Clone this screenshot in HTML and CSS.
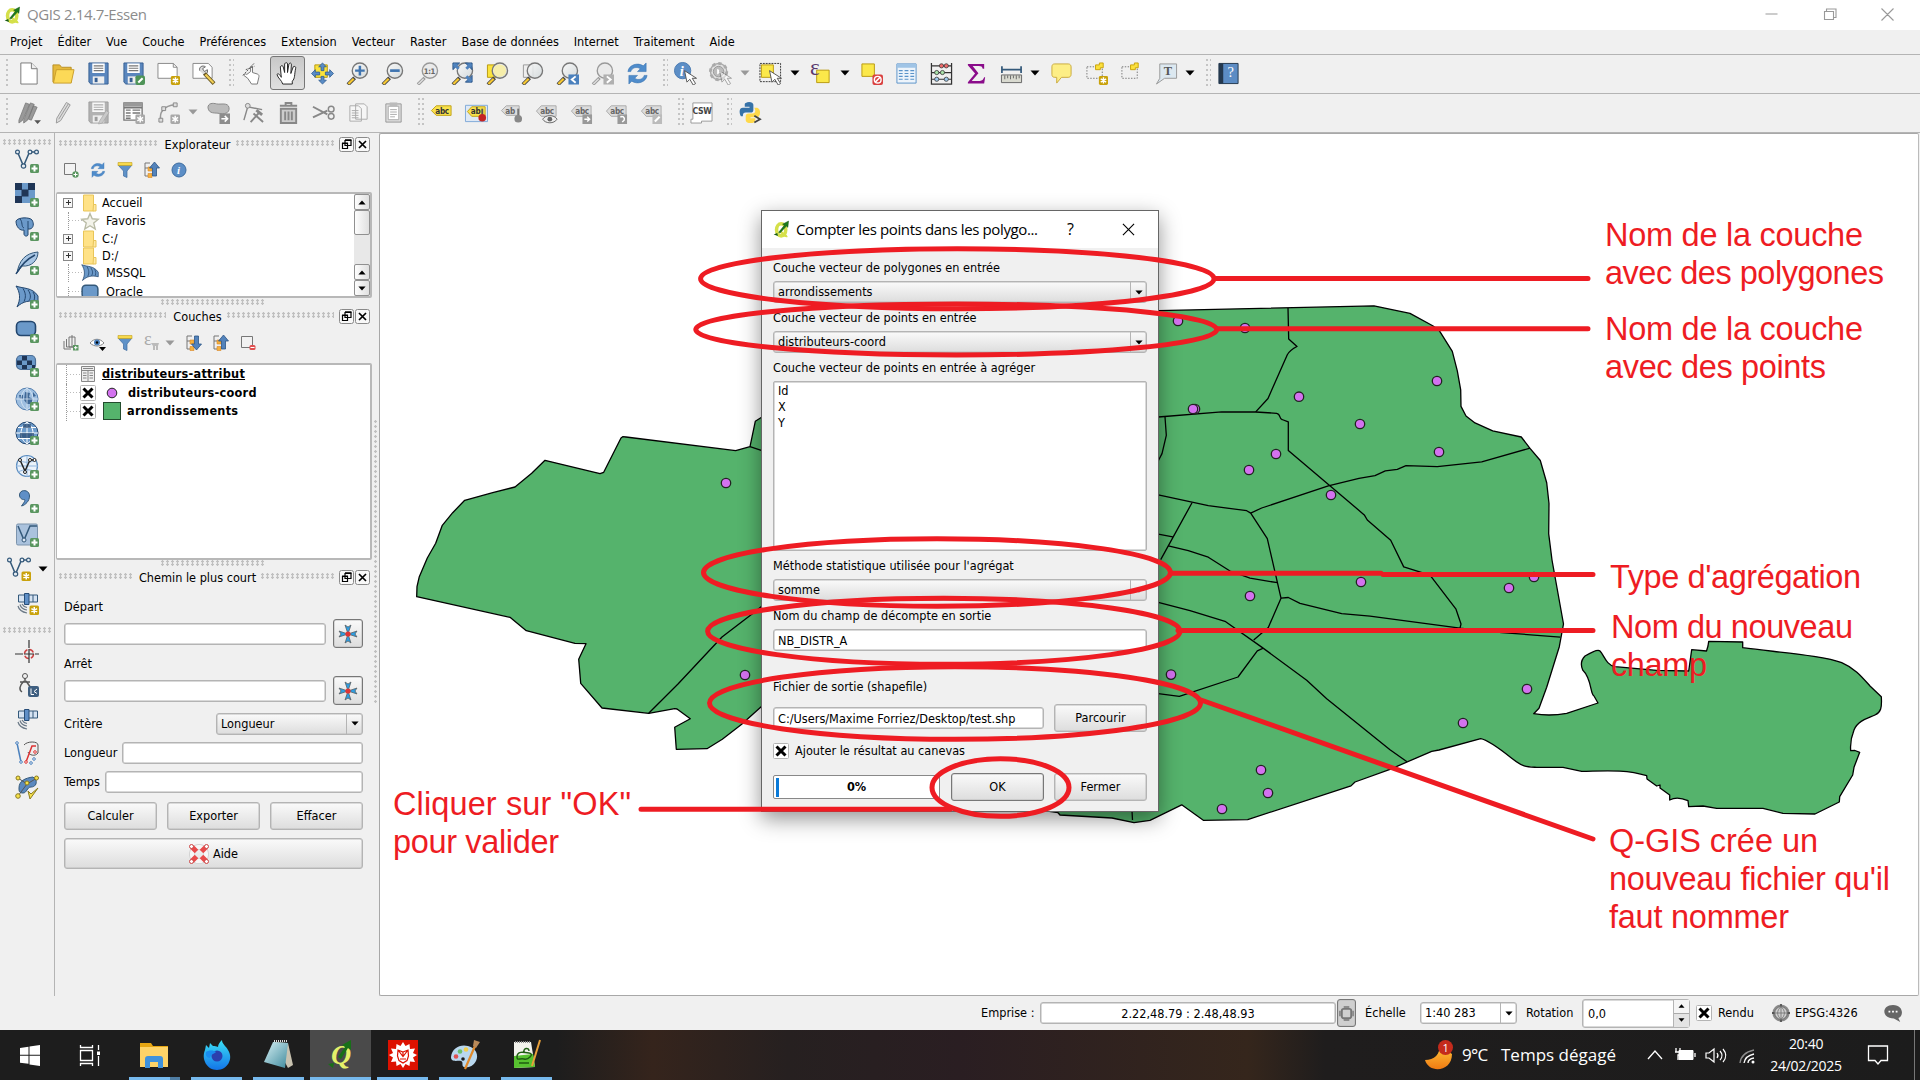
FILE: index.html
```html
<!DOCTYPE html>
<html lang="fr">
<head>
<meta charset="utf-8">
<title>QGIS 2.14.7-Essen</title>
<link rel="stylesheet" href="styles.css">
</head>
<body>
<svg class="sprite" aria-hidden="true">
  <defs>
    <linearGradient id="gl" x2="1" y2="1"><stop offset="0" stop-color="#fafafa"/><stop offset="1" stop-color="#cfd6d8"/></linearGradient>
    <linearGradient id="moon" x2="0" y2="1"><stop offset="0" stop-color="#ffc83d"/><stop offset="1" stop-color="#f07a12"/></linearGradient>
    <linearGradient id="fox" x2="0" y2="1"><stop offset="0" stop-color="#3be0f5"/><stop offset="1" stop-color="#1374e8"/></linearGradient>
    <linearGradient id="note" x2="1" y2="1"><stop offset="0" stop-color="#d6f0f4"/><stop offset="1" stop-color="#3f8a9c"/></linearGradient>
  </defs>
  <symbol id="plus" viewBox="0 0 24 24"><rect x="15" y="15" width="9" height="9" rx="1.500" fill="#5a9660"/><path d="M19.500 16.500v6M16.500 19.500h6" stroke="#fff" stroke-width="2"/></symbol>
  <symbol id="star" viewBox="0 0 24 24"><rect x="14.500" y="14.500" width="9.500" height="9.500" rx="1.500" fill="#c9a20c"/><path d="M19.250 16v6.500M16.400 17.600l5.700 3.300M22.100 17.600l-5.700 3.300" stroke="#fff" stroke-width="1.500"/></symbol>
  <symbol id="gstar" viewBox="0 0 24 24"><rect x="14" y="14" width="10" height="10" rx="1.500" fill="#a8a8a8"/><path d="M19 15.500v7M16 17.200l6 3.500M22 17.200l-6 3.500" stroke="#fff" stroke-width="1.500"/></symbol>
  <symbol id="lens" viewBox="0 0 24 24"><path d="M9 16.500l-7 7" stroke="#444" stroke-width="4"/><path d="M8 17.500l-5.500 5.500" stroke="#f7c832" stroke-width="2.400"/><circle cx="14.500" cy="9" r="8" fill="url(#gl)" fill-opacity=".85" stroke="#777" stroke-width="1.400"/></symbol>
  <symbol id="glens" viewBox="0 0 24 24"><path d="M9 16.500l-7 7" stroke="#999" stroke-width="3.400"/><path d="M8 17.500l-5.500 5.500" stroke="#ddd" stroke-width="1.600"/><circle cx="14.500" cy="9" r="8" fill="#eaeaea" stroke="#999" stroke-width="1.400"/></symbol>
  <symbol id="cursor" viewBox="0 0 24 24"><path d="M11 9l2.500 12 3-3 3.500 6 2.500-1.500-3.500-5.500h4.500z" fill="#fff" stroke="#555" stroke-width="1"/></symbol>
  <symbol id="refresh" viewBox="0 0 24 24"><path d="M2 10C3 3 12 0 18 4l3-3v9h-9l3-3C11 4.500 6 6 5 10zM22 14c-1 7-10 10-16 6l-3 3v-9h9l-3 3c4 2.500 9 1 10-3z" fill="#4f8ccb" stroke="#3a73b0" stroke-width=".6"/></symbol>
  <symbol id="floppy" viewBox="0 0 24 24"><path d="M2 1h20v22H4l-2-2z" fill="#5a86bd" stroke="#365f92"/><path d="M5.500 1.500h13v10h-13z" fill="#fff"/><path d="M7 4h10M7 6.500h10M7 9h10" stroke="#777" stroke-width="1.200"/><path d="M6 15h12v7.500H6z" fill="#eee"/><path d="M8 16.500h3v4.500H8z" fill="#365f92"/></symbol>
  <symbol id="vee" viewBox="0 0 24 24"><path d="M2.500 3l6 14 6-14h7" fill="none" stroke="#34597a" stroke-width="1.500"/><g fill="#e8eef4" stroke="#34597a" stroke-width="1.200"><circle cx="2.500" cy="3" r="1.900"/><circle cx="8.500" cy="17" r="2.200"/><circle cx="15" cy="3" r="1.900"/><circle cx="21.500" cy="3" r="1.900"/></g></symbol>
  <symbol id="label" viewBox="0 0 24 24"><path d="M6.500 6H22v11H6.500L1.500 11.500z" fill="#dcdcdc" stroke="#aaa"/><text x="5.500" y="15" class="abc" fill="#666">abc</text></symbol>
  <symbol id="sat" viewBox="0 0 24 24"><path d="M3.500 4h19v7h-19z" fill="#d6e3f2" stroke="#34597a"/><path d="M9.500 2.500h4.500v11H9.500z" fill="#5f8fc7" stroke="#274d78"/><path d="M18 4v7" stroke="#34597a"/><path d="M3 15c1 4 4 6 9 7M5 13.500c1 3.500 3.500 5 7 5.500M7 13c1 2 3 3 5 3.500" fill="none" stroke="#6c7a88" stroke-width="1.200"/></symbol>
  <symbol id="globe" viewBox="0 0 24 24"><circle cx="12" cy="12" r="11" fill="#6d9ccc" stroke="#23466e"/><path d="M1 12h22M3 6.500h18M3 17.500h18M12 1v22M12 1c-8 6-8 16 0 22M12 1c8 6 8 16 0 22" fill="none" stroke="#fff" stroke-width="1"/></symbol>
  <symbol id="folder" viewBox="0 0 16 18"><path d="M1.500 1h10v16h-10z" fill="#ffe287" stroke="#e9c558"/><path d="M11.500 10.500h2.500V17h-3z" fill="#ffe9a3" stroke="#e9c558"/></symbol>
  <symbol id="sail" viewBox="0 0 24 24"><path d="M1 1c8 3 16 1 22 10v6C15 15 8 16 2 22 6 14 5 7 1 1z" fill="#6b99c9" stroke="#23466e"/><path d="M8 3.500c3 5 3 9 1 13M13 5c3 4 3 8 1 10.500M18 7c2 3 2 5 1 8.500" stroke="#23466e" fill="none"/></symbol>
  <symbol id="filter" viewBox="0 0 16 16"><path d="M1 3h14l-5 6v6.500L6.500 14V9z" fill="#5f92c8" stroke="#3d6ca0" stroke-width=".7"/><path d="M1 .5h14v3H1z" fill="#f7d94c" stroke="#c2a11c" stroke-width=".6"/></symbol>
  <symbol id="tree" viewBox="0 0 16 16"><path d="M1 1v13h4M1 6h4M1 1h5" stroke="#777" fill="none"/><path d="M4 5h4v4H4zM4 11.500h4v4H4z" fill="#f6b13c" stroke="#d8872a" stroke-width=".6"/></symbol>
  <symbol id="arrowup" viewBox="0 0 16 16"><path d="M10.500 0l5 6h-3v8h-4V6h-3z" fill="#5383bb" stroke="#2c5587" stroke-width=".8"/></symbol>
  <symbol id="restore" viewBox="0 0 16 16"><rect x=".5" y=".5" width="14" height="14" rx="2" fill="#f8f8f8" stroke="#8a8a8a"/><path d="M6 3.500h6v5H6zM3.500 6.500h5v5h-5z" fill="#f8f8f8" stroke="#000" stroke-width="1.200"/><path d="M6 3h6.500M3 6.300h6" stroke="#000" stroke-width="1.600"/></symbol>
  <symbol id="close" viewBox="0 0 16 16"><rect x=".5" y=".5" width="14" height="14" rx="2" fill="#f8f8f8" stroke="#8a8a8a"/><path d="M4 4l7 7M11 4l-7 7" stroke="#000" stroke-width="1.700"/></symbol>
  <symbol id="check" viewBox="0 0 16 16"><rect x=".5" y=".5" width="15" height="15" rx="1" fill="#fff" stroke="#b4b4b4"/><path d="M3.500 3.500l9 9M12.500 3.500l-9 9" stroke="#000" stroke-width="3"/></symbol>
  <symbol id="tri" viewBox="0 0 10 6"><path d="M.5.500h9L5 5.500z"/></symbol>
  <symbol id="target" viewBox="0 0 20 20"><path d="M10 10L7 1l3 2 3-2zM10 10l9-3-2 3 2 3zM10 10l3 9-3-2-3 2zM10 10l-9 3 2-3-2-3z" fill="#2f9de0" stroke="#555" stroke-width=".7"/><circle cx="10" cy="10" r="2.600" fill="#e03535"/></symbol>
  <symbol id="qgis" viewBox="0 0 24 24"><ellipse cx="11.500" cy="12.500" rx="6.500" ry="8.500" fill="none" stroke="#d5e04a" stroke-width="5"/><path d="M11 16c3 0 5 7 9 5" fill="none" stroke="#d5e04a" stroke-width="3.500"/><path d="M8 16l8-10-2.500-1.500L22 0l-1 9-2-1.800L10 17z" fill="#1c7a1c" stroke="#0b4a0b" stroke-width=".6"/><path d="M1 19l5-2 1 4z" fill="#155a15"/></symbol>
</svg>

<header class="titlebar">
  <svg class="app"><use href="#qgis"/></svg>
  <span class="caption">QGIS 2.14.7-Essen</span>
  <svg class="winbtns" viewBox="0 0 150 30"><path d="M8.500 14h12M67.500 11.500h9v8h-9zM69.500 11v-2h9.500v8.500h-2M124.500 8.500l12 12M136.500 8.500l-12 12" fill="none" stroke="#999" stroke-width="1.100"/></svg>
</header>
<nav class="menu"><span>Projet</span><span>Éditer</span><span>Vue</span><span>Couche</span><span>Préférences</span><span>Extension</span><span>Vecteur</span><span>Raster</span><span>Base de données</span><span>Internet</span><span>Traitement</span><span>Aide</span></nav>

<div class="toolbar">
  <i class="grip g0"></i>
  <b class="slot"><svg viewBox="0 0 24 24"><path d="M4 1h11l6 6v16H4z" fill="#fff" stroke="#777"/><path d="M15 1v6h6" fill="#eee" stroke="#777"/></svg></b>
  <b class="slot"><svg viewBox="0 0 24 24"><path d="M1 3h7l2 2.500h10V21H1z" fill="#e5b93c" stroke="#b98f22"/><path d="M4.500 8H23l-3 14H1.500z" fill="#fcd957" stroke="#c99d2a"/></svg></b>
  <b class="slot"><svg><use href="#floppy"/></svg></b>
  <b class="slot"><svg viewBox="0 0 24 24"><use href="#floppy"/><rect x="14" y="14" width="10" height="10" rx="2" fill="#4f9458"/><path d="M17 21.500l4.500-4.500" stroke="#fff" stroke-width="2.200"/></svg></b>
  <b class="slot"><svg viewBox="0 0 24 24"><path d="M1 1.500h16l4 4V17H1z" fill="#fff" stroke="#888"/><path d="M17 1.500v4h4" fill="none" stroke="#888"/><use href="#star"/></svg></b>
  <b class="slot"><svg viewBox="0 0 24 24"><path d="M1 1.500h16l4 4V17H1z" fill="#fff" stroke="#888"/><path d="M8 9c-1-4 3-6 6-4l-3 2 2 3 3-2c1 4-2 6-4 5" fill="#ddd" stroke="#666"/><path d="M13 12l10 10.500" stroke="#665522" stroke-width="4"/><path d="M14 13l8.500 9" stroke="#f2cf55" stroke-width="2.200"/></svg></b>
  <i class="grip g1"></i>
  <b class="slot"><svg viewBox="0 0 24 24"><path d="M6 13l4-3V5c1-1 2-1 2 0v6l5 1.500c2 1 2 2 1.500 4L17 23h-6l-4-6-4-3c0-2 2-2 3-1z" fill="#fff" stroke="#777"/><path d="M2 14L14 1M5 8l9-3.500" stroke="#555" stroke-dasharray="2 1"/></svg></b>
  <b class="slot on"><svg viewBox="0 0 24 24"><path d="M7 23c-1-4-5-6-6-10 1.500-1.500 3 0 4.500 3L4.500 5c1-2 3-1 3 0l1.500 6V2c1-2 3-1.500 3 0v9l1.500-9c1-1.500 3-1 2.500 1L15.500 12l2.500-7c1.500-1 3 0 2.500 1.500C19 14 20 17 17 20v3z" fill="#fff" stroke="#222"/></svg></b>
  <b class="slot"><svg viewBox="0 0 24 24"><path d="M4 3h13v13H4z" fill="#fbe33b" stroke="#b99a10"/><path d="M12 1l4 4h-2.500v4h-3V5H8zM12 23l4-4h-2.500v-4h-3v4H8zM.500 12l4-4v2.500H9v3H4.500V16zM23.500 12l-4-4v2.500H15v3h4.500V16z" fill="#5a8cc6" stroke="#2d5a8e" stroke-width=".8"/></svg></b>
  <b class="slot"><svg viewBox="0 0 24 24"><use href="#lens"/><path d="M14.500 4v10M9.500 9h10" stroke="#3f74b0" stroke-width="2.600"/></svg></b>
  <b class="slot"><svg viewBox="0 0 24 24"><use href="#lens"/><path d="M9.500 9h10" stroke="#3f74b0" stroke-width="2.800"/></svg></b>
  <b class="slot"><svg viewBox="0 0 24 24"><use href="#glens"/><text x="8.200" y="12.500" class="one" fill="#666">1:1</text></svg></b>
  <b class="slot"><svg viewBox="0 0 24 24"><use href="#lens"/><path d="M2 1h7L2 8zM22 1h-7l7 7zM22 21h-7l7-7z" fill="#4f82bd" stroke="#2c5587"/><path d="M3 2l5 5M21 2l-5 5M21 20l-5-5" stroke="#4f82bd" stroke-width="3"/></svg></b>
  <b class="slot"><svg viewBox="0 0 24 24"><path d="M1.500 3h13v13h-13z" fill="#fbe33b" stroke="#b99a10"/><use href="#lens"/><circle cx="14.500" cy="9" r="6.500" fill="#f6eeaa"/></svg></b>
  <b class="slot"><svg viewBox="0 0 24 24"><path d="M2.500 3h10v13h-10z" fill="#eee" stroke="#999"/><use href="#lens"/></svg></b>
  <b class="slot"><svg viewBox="0 0 24 24"><use href="#lens"/><path d="M13 13h11v10.500H13z" fill="#4a80bd"/><path d="M20.500 15l-4 3.300 4 3.300" fill="none" stroke="#fff" stroke-width="2"/></svg></b>
  <b class="slot"><svg viewBox="0 0 24 24"><use href="#glens"/><path d="M13 13h11v10.500H13z" fill="#b0b0b0"/><path d="M16.500 15l4 3.300-4 3.300" fill="none" stroke="#fff" stroke-width="2"/></svg></b>
  <b class="slot"><svg><use href="#refresh"/></svg></b>
  <i class="grip g2"></i>
  <b class="slot"><svg viewBox="0 0 24 24"><circle cx="9" cy="9" r="8.500" fill="#5c8ec6" stroke="#4a7ab2"/><text x="6" y="14.500" class="info" fill="#fff">i</text><use href="#cursor"/></svg></b>
  <b class="slot"><svg viewBox="0 0 24 24"><circle cx="10" cy="10" r="8.500" fill="#e2e2e2" stroke="#aaa" stroke-width="1.500"/><circle cx="10" cy="10" r="8.500" fill="none" stroke="#aaa" stroke-width="3" stroke-dasharray="3.300 3.300"/><circle cx="10" cy="10" r="5.500" fill="#bbb" stroke="#999"/><path d="M8.500 7l5 3-5 3z" fill="#fff"/><use href="#cursor" opacity=".5"/></svg></b>
  <b class="arr dim"><svg><use href="#tri"/></svg></b>
  <b class="slot"><svg viewBox="0 0 24 24"><path d="M1 1.500h21.500v19H1z" fill="none" stroke="#333" stroke-dasharray="2 1"/><path d="M2.500 3H15v13H2.500z" fill="#fbe84a" stroke="#b99a10"/><use href="#cursor"/></svg></b>
  <b class="arr"><svg><use href="#tri"/></svg></b>
  <b class="slot"><svg viewBox="0 0 24 24"><path d="M8 8.500h13v13H8z" fill="#fbe84a" stroke="#b99a10"/><text x="1" y="14" class="eps" fill="#5b3a6e">ε</text></svg></b>
  <b class="arr"><svg><use href="#tri"/></svg></b>
  <b class="slot"><svg viewBox="0 0 24 24"><path d="M2 2h13v13H2z" fill="#fbe84a" stroke="#b99a10"/><rect x="13" y="13" width="11" height="11" rx="2" fill="#d9403f"/><circle cx="18.500" cy="18.500" r="3.500" fill="none" stroke="#fff" stroke-width="1.500"/><path d="M16 21l5-5" stroke="#fff" stroke-width="1.500"/></svg></b>
  <b class="slot"><svg viewBox="0 0 24 24"><path d="M2 2h20v20H2z" fill="#edf4fb" stroke="#5a93c9"/><path d="M2 2h20v4H2z" fill="#9fc4e6"/><path d="M4 9h4M10 9h4M16 9h4M4 12h4M10 12h4M16 12h4M4 15h4M10 15h4M16 15h4M4 18h4M10 18h4M16 18h4" stroke="#5a93c9" stroke-width="1.200"/></svg></b>
  <b class="slot"><svg viewBox="0 0 24 24"><path d="M1.500 1v22h21V1M1 4h22M1 11h22M1 18h22" fill="none" stroke="#333" stroke-width="1.300"/><g stroke="#333" stroke-width=".8"><g fill="#ee6a6a"><circle cx="12" cy="4" r="2.200"/><circle cx="17" cy="4" r="2.200"/></g><g fill="#a8e0a8"><circle cx="7" cy="11" r="2.200"/><circle cx="13" cy="11" r="2.200"/></g><g fill="#9cc8ec"><circle cx="7" cy="18" r="2.200"/><circle cx="17" cy="18" r="2.200"/></g></g></svg></b>
  <b class="slot"><svg viewBox="0 0 24 24"><path d="M3 2h17v5h-1.500c-.5-2-1.500-2.800-4-2.800H8l6 7.500-7 8h8.500c2.500 0 3.500-1.200 4.500-3.700h1L20 22.500H3v-1.500l7.500-9L3 3.500z" fill="#8a0c8a"/></svg></b>
  <b class="slot"><svg viewBox="0 0 24 24"><path d="M2 8h20M2 4.500v7M22 4.500v7" stroke="#34597a" stroke-width="1.800"/><path d="M1.500 13.500h21v8h-21z" fill="#d9dad0" stroke="#666"/><path d="M5 14v4M8 14v3M11 14v4M14 14v3M17 14v4M20 14v3" stroke="#666"/></svg></b>
  <b class="arr"><svg><use href="#tri"/></svg></b>
  <b class="slot"><svg viewBox="0 0 24 24"><path d="M5 2h14c2 0 3 1.500 3 3v8c0 2-1.500 3-3 3H12l-5 6v-6H5c-2 0-3-1-3-3V5c0-2 1-3 3-3z" fill="#fdee86" stroke="#c9a93c"/></svg></b>
  <b class="slot"><svg viewBox="0 0 24 24"><path d="M2 5h16v12H2z" fill="none" stroke="#777" stroke-dasharray="1.500 1.500"/><path d="M11 3h4V1h4v5h-3v2h-5z" fill="#fbe03b" stroke="#c9a20c"/><use href="#star"/></svg></b>
  <b class="slot"><svg viewBox="0 0 24 24"><path d="M2 5h16v12H2z" fill="none" stroke="#777" stroke-dasharray="1.500 1.500"/><path d="M11 3h4V1h4v5h-3v2h-5z" fill="#fbe03b" stroke="#c9a20c"/></svg></b>
  <b class="slot"><svg viewBox="0 0 24 24"><path d="M5 2h17.500v15H10l-8.500 6L5 17z" fill="#dce8f0" stroke="#999"/><text x="9" y="14" class="tee" fill="#555">T</text></svg></b>
  <b class="arr"><svg><use href="#tri"/></svg></b>
  <i class="grip g3"></i>
  <b class="slot"><svg viewBox="0 0 24 24"><path d="M2 1.500h20v21H2z" fill="#5c8cc4" stroke="#24384e"/><path d="M2 1.500h4.500v21H2z" fill="#24384e"/><text x="11" y="16" class="q" fill="#fff">?</text></svg></b>
</div>

<div class="toolbar">
  <i class="grip g0"></i>
  <b class="slot"><svg viewBox="0 0 24 24"><path d="M2 20L9 2l4 1.500L6 20l-4 3zM7 20l7-18 4 1.500L11 20l-4 3zM12 19l5-14 4 1.500L15 20z" fill="#999" stroke="#777" stroke-width=".8"/><path d="M18 20h7l-3.500 4z" fill="#555"/></svg></b>
  <b class="slot"><svg viewBox="0 0 24 24"><path d="M5 18L15 1.500l4 2.500L9 20.500 4.500 23z" fill="#ddd" stroke="#999"/><path d="M7 19L17 3" stroke="#999"/></svg></b>
  <b class="slot gray"><svg viewBox="0 0 24 24"><use href="#floppy"/><path d="M13 21l7-11 3 2-7 11-4 1z" fill="#aaa" stroke="#666" stroke-width=".7"/></svg></b>
  <b class="slot"><svg viewBox="0 0 24 24"><path d="M2 2h19v18H2zM2 7h19" fill="#fff" stroke="#777" stroke-width="1.400"/><path d="M2 2h19v4H2z" fill="#999"/><path d="M4 9.500h5M11 9.500h8M4 12.500h5M11 12.500h8M4 15.500h5M4 18h5" stroke="#777" stroke-width="1.500"/><use href="#gstar"/></svg></b>
  <b class="slot"><svg viewBox="0 0 24 24"><path d="M4 20C2 12 7 5 19 4" fill="none" stroke="#999" stroke-width="1.600"/><path d="M2 18h4v4H2zM5 6h4v4H5zM17 2h4v4h-4z" fill="#ddd" stroke="#888"/><use href="#gstar"/></svg></b>
  <b class="arr dim"><svg><use href="#tri"/></svg></b>
  <b class="slot"><svg viewBox="0 0 24 24"><path d="M1 7c0-5 5-5 9-4s12-2 13 4-6 7-10 6S2 14 1 7z" fill="#bbb" stroke="#888"/><path d="M13 13h11v11H13z" fill="#8d8d8d"/><path d="M15 18.500h6M18.500 15.500l3 3-3 3" fill="none" stroke="#fff" stroke-width="1.600"/></svg></b>
  <b class="slot"><svg viewBox="0 0 24 24"><path d="M2 20L6 6l15 3" fill="none" stroke="#888" stroke-width="1.500"/><circle cx="6" cy="5" r="2.500" fill="#ddd" stroke="#888"/><path d="M9 22l9-10M12 13l10 9" stroke="#888" stroke-width="2"/><path d="M15 9.500l6 5" stroke="#888" stroke-width="3"/></svg></b>
  <b class="slot"><svg viewBox="0 0 24 24"><path d="M4 8h16v15H4z" fill="#ccc" stroke="#888" stroke-width="2"/><path d="M3 5h18M9 5V2h6v3M8.500 11v9M12 11v9M15.500 11v9" fill="none" stroke="#888" stroke-width="2"/></svg></b>
  <b class="slot"><svg viewBox="0 0 24 24"><path d="M1 6l15 8M1 17l15-7" stroke="#888" stroke-width="2"/><circle cx="20" cy="8.500" r="3" fill="none" stroke="#888" stroke-width="1.500"/><circle cx="20" cy="16" r="3" fill="none" stroke="#888" stroke-width="1.500"/></svg></b>
  <b class="slot"><svg viewBox="0 0 24 24"><path d="M9 3h9l3 3v13H9zM3 5h9l3 3v13H3z" fill="#f6f6f6" stroke="#aaa"/><path d="M5 10h7M5 12.500h7M5 15h7M5 17.500h7" stroke="#aaa"/></svg></b>
  <b class="slot"><svg viewBox="0 0 24 24"><path d="M4 3h16v19H4z" fill="#ddd" stroke="#999"/><path d="M6.500 5.500h11v14h-11z" fill="#fff" stroke="#aaa"/><path d="M8 1.500h8v4H8z" fill="#bbb"/><path d="M8.500 9h7M8.500 11.500h7M8.500 14h7M8.500 16.500h5" stroke="#aaa"/></svg></b>
  <i class="grip g3"></i>
  <b class="slot"><svg viewBox="0 0 24 24"><path d="M6.500 5H22v10H6.500L1.500 10z" fill="#f9e14b" stroke="#c0a21a"/><text x="5.500" y="13.500" class="abc" fill="#333">abc</text></svg></b>
  <b class="slot"><svg viewBox="0 0 24 24"><path d="M.5 4.500h23v17H.5z" fill="#dfe9f5" stroke="#7fa9d8"/><path d="M7 6h14v10H7L2.500 11z" fill="#f9e14b" stroke="#c0a21a"/><text x="6" y="14" class="abc" fill="#333">ab</text><path d="M18 8v8" stroke="#555" stroke-width="2"/><circle cx="18" cy="17.500" r="4" fill="#c42323"/></svg></b>
  <b class="slot"><svg viewBox="0 0 24 24"><path d="M6.500 5H20v10H6.500L1.500 10z" fill="#dcdcdc" stroke="#aaa"/><text x="5.500" y="13.500" class="abc" fill="#666">ab</text><path d="M19 8v8" stroke="#777" stroke-width="2"/><circle cx="19" cy="18.500" r="4" fill="#888"/></svg></b>
  <b class="slot"><svg viewBox="0 0 24 24"><use href="#label" y="-1"/><path d="M8 19c3-5 12-5 15 0-3 5-12 5-15 0z" fill="#eee" stroke="#666"/><circle cx="15.500" cy="19" r="2.500" fill="#666"/></svg></b>
  <b class="slot"><svg viewBox="0 0 24 24"><use href="#label" y="-1"/><path d="M13 14h10v10H13z" fill="#999"/><path d="M15 19h5M18 16.500l2.500 2.500-2.500 2.500" fill="none" stroke="#fff" stroke-width="1.500"/></svg></b>
  <b class="slot"><svg viewBox="0 0 24 24"><use href="#label" y="-1"/><path d="M13 14h10v10H13z" fill="#999"/><path d="M16 17c2-2 5 0 4 3l-2 2" fill="none" stroke="#fff" stroke-width="1.500"/></svg></b>
  <b class="slot"><svg viewBox="0 0 24 24"><use href="#label" y="-1"/><path d="M13 14h10v10H13z" fill="#bbb"/><path d="M15.500 21.500l5-5" fill="none" stroke="#fff" stroke-width="2.200"/></svg></b>
  <i class="grip g4"></i>
  <b class="slot"><svg viewBox="0 0 24 24"><path d="M1 19v4h11v-2h11V2H3v17z" fill="#fff" stroke="#999"/><text x="2.500" y="14" class="csw" fill="#444">CSW</text></svg></b>
  <i class="grip g1"></i>
  <b class="slot"><svg viewBox="0 0 24 24"><path d="M7 2c3-2 8-1 8 2v5c0 2-1 3-3 3H7c-2 0-3 1-3 4H2C0 12 0 7 4 7h7V6H6V4c0-1 0-1.500 1-2z" fill="#3672a8"/><path d="M16 7h3c4 1 4 9 0 10h-7v1h5v2c0 4-10 4-10 0v-4c0-2 1-3 3-3h4c2 0 3-1 3-3z" fill="#ffd94a"/><path d="M16 15.500l6 3.500-6 3.500" fill="none" stroke="#444" stroke-width="1.800"/></svg></b>
</div>

<main class="work">
  <aside class="side">
    <i class="hgrip"></i>
    <svg viewBox="0 0 24 24"><use href="#vee"/><use href="#plus"/></svg>
    <svg viewBox="0 0 24 24"><path d="M0 0h20v20H0z" fill="#6b99c9"/><path d="M0 0h7v7H0zM13 0h7v7h-7zM6.500 6.500h7v7h-7zM0 13h7v7H0z" fill="#1f3556"/><use href="#plus"/></svg>
    <svg viewBox="0 0 24 24"><path d="M1 4c2-4 14-4 16-1s2 8-2 9l-2 0v6c-1 2-4 1-4-1v-4c-4 1-8-3-8-9z" fill="#6b99c9" stroke="#23466e"/><path d="M5 2c3 3 1 8 4 9M13 12V4" fill="none" stroke="#23466e"/><use href="#plus"/></svg>
    <svg viewBox="0 0 24 24"><path d="M2 22C4 10 10 2 23 1c0 8-6 15-16 14z" fill="#a9c6e4" stroke="#34597a"/><path d="M1 23C6 14 12 8 20 4" fill="none" stroke="#23466e" stroke-width="1.500"/><use href="#plus"/></svg>
    <svg viewBox="0 0 24 24"><use href="#sail"/><use href="#plus"/></svg>
    <svg viewBox="0 0 24 24"><rect x="1.500" y="2.500" width="19" height="14" rx="4.500" fill="#6b99c9" stroke="#23466e" stroke-width="1.600"/><use href="#plus"/></svg>
    <svg viewBox="0 0 24 24"><rect x="1.500" y="2.500" width="19" height="14" rx="4.500" fill="#6b99c9" stroke="#4a6d96" stroke-width="1.200"/><path d="M7 3h5v4.500H7zM2 7.500h5V12H2zM12 7.500h5V12h-5zM7 12h5v4H7zM17 12h3v3h-3z" fill="#1f3556"/><use href="#plus"/></svg>
    <svg viewBox="0 0 24 24"><circle cx="12" cy="12" r="11" fill="#9fbfe0" stroke="#5580b0"/><path d="M4 8h4v4H5zM10 5l5 1-1 4 4 2-2 5h-4l-3-4zM18 5l3 4-3 1z" fill="#3f6897"/><path d="M1 12h22M12 1v22M12 1c-8 6-8 16 0 22M12 1c8 6 8 16 0 22" fill="none" stroke="#dbe8f5" stroke-width=".8"/><use href="#plus"/></svg>
    <svg viewBox="0 0 24 24"><use href="#globe"/><path d="M5 12h14v5H5zM8 3h8v4H8z" fill="#23466e" opacity=".7"/><use href="#plus"/></svg>
    <svg viewBox="0 0 24 24"><circle cx="12" cy="11" r="10.500" fill="#eaf2fa" stroke="#5a8cc0" stroke-width="1.200"/><path d="M1 11h22M12 1v21M3 5c6 3 12 3 18 0M3 17c6-3 12-3 18 0" fill="none" stroke="#8fb4dc"/><path d="M5 5l5 11 5-11h5" fill="none" stroke="#222" stroke-width="1.500"/><g fill="#fff" stroke="#222"><circle cx="5" cy="5" r="1.500"/><circle cx="10" cy="17" r="1.500"/><circle cx="15" cy="5" r="1.500"/><circle cx="19.500" cy="5" r="1.500"/></g><use href="#plus"/></svg>
    <svg viewBox="0 0 24 24"><path d="M4.500 6c0-6 10-6 10 1 0 5-4 9-8 10 2-3 4-5 3-6.500C7 11 4.500 9 4.500 6z" fill="#5f8fc7" stroke="#34597a"/><use href="#plus"/></svg>
    <svg viewBox="0 0 24 24"><rect x="1.500" y="1" width="21" height="21" rx="1.500" fill="#aac2dd" stroke="#7c94ad"/><path d="M3 3l6 14 6-14h7" fill="none" stroke="#34597a" stroke-width="1.500"/><circle cx="9" cy="17" r="2" fill="#dde8f4" stroke="#34597a"/><use href="#plus"/></svg>
    <span class="pair"><svg viewBox="0 0 24 24"><use href="#vee"/><use href="#star"/></svg><svg class="t"><use href="#tri"/></svg></span>
    <svg viewBox="0 0 24 24"><use href="#sat"/><use href="#star"/></svg>
    <i class="hgrip low"></i>
    <svg viewBox="0 0 24 24"><path d="M0 15h8M20 15h4M14 1v8M14 20v4" stroke="#333" stroke-width="1.200"/><circle cx="14" cy="15" r="4.500" fill="none" stroke="#c44" stroke-width="1.500" stroke-dasharray="5 2"/><path d="M9 15h10M14 10v10" stroke="#333" stroke-width="1.200"/></svg>
    <svg viewBox="0 0 24 24"><circle cx="10" cy="3" r="2.500" fill="none" stroke="#555"/><path d="M10 5v4M5 9h10M9 8c-5 5-5 9-2 11M11 8l5 7" fill="none" stroke="#555" stroke-width="1.500"/><rect x="13" y="13" width="11" height="11" rx="2" fill="#3f5f80"/><path d="M16 15.500v6h3M22 16l-3 2.500 3 2" fill="none" stroke="#fff"/></svg>
    <svg viewBox="0 0 24 24"><use href="#sat"/></svg>
    <svg viewBox="0 0 24 24"><path d="M2 2l4 19" stroke="#4a80bd" stroke-width="1.500"/><path d="M9 4c3-4 14-4 14 0v8c-3 4-9 2-10-1" fill="#eee" stroke="#555"/><path d="M11 21l6-16h4" fill="none" stroke="#d33" stroke-width="1.500"/><g fill="#fff" stroke="#4a80bd"><circle cx="2" cy="2" r="1.300"/><circle cx="6" cy="21" r="1.300"/><circle cx="19" cy="18" r="1.300"/><circle cx="16" cy="22" r="1.300"/></g><g fill="#fff" stroke="#d33"><circle cx="11" cy="21" r="1.300"/><circle cx="20" cy="11" r="1.300"/></g></svg>
    <svg viewBox="0 0 24 24"><path d="M4 13C4 6 10 3 18 2l3 3c1 4-1 7-5 7s-4 6-8 6-4-2-4-5z" fill="#5b89bf" stroke="#34597a"/><path d="M3 3l9 6 10-6M12 9L3 21" fill="none" stroke="#555"/><g fill="#f7e24a" stroke="#8a7a20"><circle cx="3" cy="3" r="2"/><circle cx="21.500" cy="3" r="2"/><circle cx="12" cy="8" r="2"/><circle cx="3" cy="21" r="2.300"/><path d="M13 16l3 3 7-6-8 11z"/></g></svg>
  </aside>

  <section class="docks">
    <h2><i></i><span>Explorateur</span><i></i><svg><use href="#restore"/></svg><svg><use href="#close"/></svg></h2>
    <div class="mini">
      <svg viewBox="0 0 16 16"><path d="M1.500 1.500h11v11h-11z" fill="#f2f2f2" stroke="#777"/><circle cx="12.500" cy="12.500" r="3.200" fill="#5a9660"/><path d="M12.500 10.500v4M10.500 12.500h4" stroke="#fff"/></svg>
      <svg><use href="#refresh"/></svg>
      <svg><use href="#filter"/></svg>
      <svg viewBox="0 0 16 16"><use href="#tree"/><use href="#arrowup"/></svg>
      <svg viewBox="0 0 16 16"><circle cx="8" cy="8" r="7" fill="#5c8ec6" stroke="#3d6ca0"/><text x="6" y="12" class="ismall" fill="#fff">i</text></svg>
    </div>
    <div class="box explorer">
      <ul class="files">
        <li class="r17"><em class="pm"></em><svg class="fo"><use href="#folder"/></svg>Accueil</li>
        <li class="r19 wide"><em></em><svg viewBox="0 0 24 24"><path d="M12 2l3 7 8 .800-6 5 2 8-7-4.500L5 22.800l2-8-6-5L9 9z" fill="#f3f3ea" stroke="#b9bba5" stroke-width="1.800"/></svg>Favoris</li>
        <li class="r17"><em class="pm"></em><svg class="fo"><use href="#folder"/></svg>C:/</li>
        <li class="r16"><em class="pm"></em><svg class="fo"><use href="#folder"/></svg>D:/</li>
        <li class="r19 wide"><em></em><svg><use href="#sail"/></svg>MSSQL</li>
        <li class="cut wide"><em></em><svg viewBox="0 0 24 24"><rect x="1.500" y="3" width="21" height="17" rx="5" fill="#6b99c9" stroke="#34597a" stroke-width="2"/></svg>Oracle</li>
      </ul>
      <div class="scroll"><b><svg class="up"><use href="#tri"/></svg></b><b class="thumb"></b><s></s><b><svg class="up"><use href="#tri"/></svg></b><b><svg><use href="#tri"/></svg></b></div>
    </div>
    <i class="splitter"></i>
    <h2><i></i><span>Couches</span><i></i><svg><use href="#restore"/></svg><svg><use href="#close"/></svg></h2>
    <div class="mini layers-mini">
      <svg viewBox="0 0 16 16"><path d="M1 6v8h7M3.500 4v8h7M6 2h6v10H6zM9 0v12" fill="none" stroke="#777"/><path d="M10 10h5.500v5.500H10z" fill="#5a9660"/><path d="M12.700 11v3.500M11 12.700h3.500" stroke="#fff"/></svg>
      <svg viewBox="0 0 16 16"><path d="M0 8c4-5 10-5 14 0-4 4-10 4-14 0z" fill="#fff" stroke="#888"/><circle cx="7" cy="7.500" r="3" fill="#4a80bd"/><circle cx="7" cy="7.500" r="1.200"/><path d="M9 12h7l-3.500 4z"/></svg>
      <svg><use href="#filter"/></svg>
      <svg class="w" viewBox="0 0 16 16"><text x="0" y="10" class="eps2" fill="#aaa">ε</text><path d="M7 8h8l-1 3v4h-2v-4h-1v4H9v-4z" fill="#bbb"/></svg>
      <svg class="t dim"><use href="#tri"/></svg>
      <svg viewBox="0 0 16 16"><use href="#tree"/><use href="#arrowup" transform="matrix(1 0 0 -1 0 15)"/></svg>
      <svg viewBox="0 0 16 16"><use href="#tree"/><use href="#arrowup"/></svg>
      <svg viewBox="0 0 16 16"><path d="M1.500 1.500h11v11h-11z" fill="#f2f2f2" stroke="#777"/><rect x="9.500" y="10" width="6" height="5" rx="1.500" fill="#e05050"/><path d="M10.500 12.500h4" stroke="#fff"/></svg>
    </div>
    <div class="box layers">
      <div><em></em><svg class="k" viewBox="0 0 16 16"><path d="M1.500.500h13v15h-13zM1 4.500h14M8 5v10" fill="#eee" stroke="#888"/><path d="M3 2.500h10M3 7h3.500M9.500 7H13M3 9.500h3.500M9.500 9.500H13M3 12h3.500M9.500 12H13" stroke="#888"/></svg><u>distributeurs-attribut</u></div>
      <div><em></em><svg class="k"><use href="#check"/></svg><svg class="d" viewBox="0 0 18 18"><circle cx="9" cy="9" r="4.800" fill="#d372ef" stroke="#222"/></svg><span class="in">distributeurs-coord</span></div>
      <div><em></em><svg class="k"><use href="#check"/></svg><i class="swatch"></i><span>arrondissements</span></div>
    </div>
    <i class="splitter s2"></i>
    <h2 class="h3"><i></i><span>Chemin le plus court</span><i></i><svg><use href="#restore"/></svg><svg><use href="#close"/></svg></h2>
    <form class="path">
      <label class="top">Départ</label>
      <div class="row pick"><span class="field"></span><span class="btn dark"><svg><use href="#target"/></svg></span></div>
      <label class="top second">Arrêt</label>
      <div class="row pick"><span class="field"></span><span class="btn dark"><svg><use href="#target"/></svg></span></div>
      <div class="row crit"><label>Critère</label><span class="combo">Longueur<b><svg><use href="#tri"/></svg></b></span></div>
      <div class="row"><label>Longueur</label><span class="field"></span></div>
      <div class="row"><label>Temps</label><span class="field"></span></div>
      <div class="row trio"><span class="btn">Calculer</span><span class="btn">Exporter</span><span class="btn">Effacer</span></div>
      <span class="btn help"><svg viewBox="0 0 20 20"><circle cx="10" cy="10" r="7" fill="none" stroke="#ccc" stroke-width="6"/><circle cx="10" cy="10" r="7" fill="none" stroke="#f6f6f6" stroke-width="4.500"/><path d="M3 3l4.500 4.500M17 3l-4.500 4.500M3 17l4.500-4.500M17 17l-4.500-4.500" stroke="#e84a4a" stroke-width="5"/><g fill="#fff" stroke="#c44"><circle cx="2.500" cy="2.500" r="2"/><circle cx="17.500" cy="2.500" r="2"/><circle cx="2.500" cy="17.500" r="2"/><circle cx="17.500" cy="17.500" r="2"/></g></svg>Aide</span>
    </form>
  </section>
  <i class="vsplit"></i>

  <section class="canvas">
    <svg viewBox="380 134 1538 861" width="1538" height="861">
      <g fill="#55b36c" stroke="#000" stroke-width="1.300" stroke-linejoin="round">
        <path d="M762 417L755.300 421.300 750 446.700 735.700 450.700 626 437 622.700 436.700 621 438 603.700 472.300 600 473.700 545 460.300 531.700 473.300 515 487 492.700 492.700 464.700 500.300 452.700 512.700 442.300 525.300 435.700 543.300 427.300 558 419.300 576.700 417 586.700 416.700 596.700 510 617.300 526.300 630.700 575 643.300 586 643.700 578.700 659.300 580.700 683.300 602 708 648.700 713.300 674.700 708.700 677 709 690.300 718.700 674.700 727.300 676.300 749.300 707 748.700 722.300 739.300 741.700 724.300 762 706 900 790 1058 812.700 1060 815 1112 818 1134 822.700 1150 820.300 1181.700 804.800 1203.300 820.300 1247.700 819.600 1351 785.900 1355 782 1390 769.300 1431.700 751.400 1439 750 1480.700 738.700C1488 740 1500 749 1511.700 758.300S1527 767 1536.700 767.300L1563 767.300 1581.700 771.300C1604 771 1625 769 1646.700 775.700L1647 779 1656.700 786 1660 785 1660 788 1669.700 795 1669.700 800C1675 797 1682 798 1688 800.700L1688.700 806.700 1703 806 1716.700 808.300 1763 808.300 1783 813.300 1815 814 1839.300 802 1839.700 796.700 1852.700 775 1854 767.300 1859.700 752.300 1855 750.500 1850.700 750.700C1850 743 1852 735 1854 730 1858 720 1869 718 1875 715S1882 708 1881.300 696.700L1870 686C1862 677 1856 669 1841.700 662.700 1825 656 1785 653 1742.700 647.700L1742.700 642 1708.700 641.300 1708 646 1706.500 651 1691.700 649.700 1688.700 671 1656.700 670.300 1615 666.700C1606 665 1604 655 1600 651 1598 649 1590 653 1585 656 1580 661 1581 666 1582.700 670 1592 679 1590 694 1594 696L1598 703 1566.700 713.300Q1550 716.500 1533.700 713.700L1539 708.300 1546.700 687.300 1559.300 646.700 1563.500 624 1552 560 1548.700 533.800 1549 503.500 1546.700 482.800 1540.300 460.500 1530 448.400 1521.300 437 1492.700 430.800 1475 422.900 1466 416 1461 406.400 1460.700 389.900 1457.300 370.900 1452.300 351.300 1439.300 330.600 1432.700 325.800 1410 313.400 1374 305.800 1158.300 310.700 1000 313 900 350z"/>
        <g fill="none">
          <path d="M750 446.700L762 450.700M648.700 713.300L678 684 722 637 756 611 762 606M1132 811L1132.500 820"/>
          <path d="M1288 307.900L1288.700 338.900 1297 346.500Q1290 350 1287.300 354.700L1268 398.500 1255.700 411.900"/>
          <path d="M1158.300 417L1221.700 411.900 1255.700 412 1276.700 413.300C1281 414 1279 419 1282 419.500L1288.300 421.900 1288.300 450.500 1364.300 514.900 1367.300 520 1390.700 540.300 1403.700 566.900 1430 575.100 1456 609.200 1461 624 1460 628.200"/>
          <path d="M1165 417L1166.300 435.300 1162 453.600 1158.300 460.800M1158.300 494.900L1208.300 505.600 1246.700 510.700 1250.700 513.100 1261.700 508 1328.300 485.900 1359 478.400 1375 475.600 1385.300 470.800 1397.300 469.400 1406 465.600 1437.300 466.700 1481.700 461.800 1530 448.100"/>
          <path d="M1250.700 513.100L1267.300 538.600 1281 598.200 1268.300 627.500 1253.700 639.900M1192 502.800L1160.700 559.600M1158.300 534.100L1172.700 536.900M1168.300 545.900L1188.300 550.700 1208.300 557.200 1230 571 1250 578.200 1277.300 582.700"/>
          <path d="M1158.300 602.300L1190 610.600 1225 621.300 1261.700 647.100 1306.700 680.200 1326.700 698.700 1390 749.700 1407 761.800M1281 598.200L1288.300 597.500 1300 603.400 1341.700 613.700 1370 616.100 1460 628.200 1501.700 632.600 1560.300 637.100M1263.300 648.100L1257.300 650.900 1238 677 1179.300 696.300 1158.300 693.600"/>
        </g>
      </g>
      <g fill="#d372ef" stroke="#222" stroke-width="1.300"><circle cx="726" cy="483" r="4.700"/><circle cx="745" cy="675" r="4.700"/><circle cx="1178" cy="321" r="4.700"/><circle cx="1245" cy="328" r="4.700"/><circle cx="1299" cy="396.700" r="4.700"/><circle cx="1437" cy="381" r="4.700"/><circle cx="1360" cy="424" r="4.700"/><circle cx="1195" cy="409" r="4.700"/><circle cx="1193" cy="409" r="4.700"/><circle cx="1276" cy="454" r="4.700"/><circle cx="1439" cy="452" r="4.700"/><circle cx="1249" cy="470" r="4.700"/><circle cx="1331" cy="495" r="4.700"/><circle cx="1361" cy="582" r="4.700"/><circle cx="1250" cy="596" r="4.700"/><circle cx="1509" cy="588" r="4.700"/><circle cx="1534" cy="577" r="4.700"/><circle cx="1171" cy="674.600" r="4.700"/><circle cx="1527" cy="689" r="4.700"/><circle cx="1463" cy="723" r="4.700"/><circle cx="1261" cy="770" r="4.700"/><circle cx="1268" cy="793" r="4.700"/><circle cx="1222" cy="809" r="4.700"/></g>
    </svg>
  </section>
</main>

<footer class="status">
  <span>Emprise :</span><span class="field ext">2.22,48.79 : 2.48,48.93</span>
  <span class="btn tog"><svg viewBox="0 0 16 16"><rect x="3" y="3" width="10" height="10" rx="2" fill="none" stroke="#777" stroke-width="2"/><path d="M1 5v6M15 5v6M5 1h6M5 15h6" stroke="#777" stroke-width="1.500"/></svg></span>
  <span class="lab1">Échelle</span><span class="combo white">1:40 283<b><svg><use href="#tri"/></svg></b></span>
  <span class="lab2">Rotation</span><span class="field spin">0,0<b><svg class="up"><use href="#tri"/></svg><svg><use href="#tri"/></svg></b></span>
  <svg class="k"><use href="#check"/></svg><span class="lab3">Rendu</span>
  <svg class="crs" viewBox="0 0 20 20"><circle cx="10" cy="10" r="9.500" fill="#8a8a8a"/><path d="M10 0v20M0 10h20" stroke="#555" stroke-width="2"/><circle cx="10" cy="10" r="7" fill="#cfcfcf" stroke="#666"/><path d="M3 10h14M10 3v14M10 3c-5 4-5 10 0 14M10 3c5 4 5 10 0 14" fill="none" stroke="#777"/></svg><span>EPSG:4326</span>
  <svg class="msg" viewBox="0 0 20 20"><path d="M10 1c12 0 12 13 6 14.500l2 4.500-7-4C-3 16-3 1 10 1z" fill="#666"/><path d="M5 8.500h2M9 8.500h2M13 8.500h2" stroke="#fff" stroke-width="2"/></svg>
</footer>

<footer class="taskbar">
  <b class="tb plain"><svg viewBox="0 0 28 28"><path d="M4 7l8.500-1.200v8H4zM13.500 5.600L24 4v9.800H13.500zM4 14.800h8.500v8L4 21.700zM13.500 14.800H24V25l-10.500-1.600z" fill="#fff"/></svg></b>
  <b class="tb plain"><svg viewBox="0 0 28 28"><path d="M4.500 9.500h12v10h-12zM4.500 4v2.500h12V4M4.500 25v-2.500h12V25M22.500 4v5M22.500 15v10" fill="none" stroke="#fff" stroke-width="1.300"/><path d="M21 10.500h3V14h-3z" fill="#fff"/></svg></b>
  <b class="tb two"><svg viewBox="0 0 28 28"><path d="M0 2h11l2 3h15v21H0z" fill="#e5a512"/><path d="M0 6h28v20H0z" fill="#fdd368"/><path d="M5 27V18c0-2 1-3 3-3h12c2 0 3 1 3 3v9h-5v-6h-8v6z" fill="#3f92dc"/></svg></b>
  <b class="tb"><svg viewBox="0 0 28 28"><path d="M2 9l1-5 3 3 1-5 3 3c2 0 3 0 5 1 0-3 2-5 4-7 0 4 4 6 6 10 6 9-1 20-11 20S-2 18 2 9z" fill="url(#fox)"/><circle cx="14" cy="15" r="5.500" fill="#2b3fae"/><path d="M3 11c3-2 7-2 10 0-2 2-5 2-6 6-3 0-5-3-4-6z" fill="#1a8cf0"/></svg></b>
  <b class="tb"><svg viewBox="0 0 28 28"><path d="M9 1l14 1 5 22-5 3z" fill="#c8c2b0"/><path d="M8 1l15 1-3 25L-1 21z" fill="url(#note)"/><path d="M9 0h14" stroke="#ddd" stroke-width="2" stroke-dasharray="1 1"/></svg></b>
  <b class="tb act"><svg viewBox="0 0 28 28"><text x="4" y="23" class="bigq" fill="#e4f06a">Q</text><path d="M11 16L18 6l-3-2 9-5v10l-3-2-7 11zM1 23l6-1-1 5z" fill="#187018"/></svg></b>
  <b class="tb"><svg viewBox="0 0 28 28"><path d="M-1-1h30v30H-1z" fill="#dd1100"/><path d="M14 1l2.500 4 4-2 .5 5 5-.5-2 4.500 4 2-4 2.500 2 4.500-5-.5-.5 4.500-4-2-2.500 4-2.500-4-4 2-.5-4.500-5 .5 2-4.500-4-2.500 4-2-2-4.500 5 .5.500-5 4 2z" fill="#fff"/><path d="M14 11l5-2 .5 6-1.500 4.500-4 2.500-4-2.500L8.500 15 9 9zM9 9l5 6.500L19 9M11 18h6M14 11v4" fill="none" stroke="#dd1100" stroke-width="1.200"/></svg></b>
  <b class="tb"><svg viewBox="0 0 28 28"><path d="M0 16C1 7 9 3 17 5s11 9 8 15-9 7-12 6 0-5-3-6-10 2-10-4z" fill="#b9d8ef"/><circle cx="5" cy="15.500" r="2.300" fill="#e05252"/><circle cx="9" cy="10.500" r="2.300" fill="#6cc06c"/><circle cx="15" cy="8.500" r="2.300" fill="#f2ce4e"/><circle cx="12" cy="18" r="1.800" fill="#1d1d1d"/><path d="M14 28L24 5" stroke="#e08a2c" stroke-width="2.200"/><path d="M22 5l1-6 6 2-4 6z" fill="#b98a5a"/></svg></b>
  <b class="tb"><svg viewBox="0 0 28 28"><path d="M1 1h17l4 25-21 1z" fill="#f2f2ec"/><path d="M1 15l19-2 2 13-21 1z" fill="#57c22f"/><path d="M2 1h15" stroke="#888" stroke-width="2" stroke-dasharray="1 1"/><path d="M4 16c0-6 6-5 12-4s-1 7-5 6-7 2-7-2zM11 11c-1-4 5-5 5-1M6 22h10" fill="none" stroke="#1f5c12" stroke-width="1.500"/><path d="M19 25l8-26" stroke="#e8a03a" stroke-width="2"/></svg></b>
  <div class="tray">
    <svg class="wx" viewBox="0 0 30 32"><path d="M15 6c2 9-5 15-14 15 4 14 27 12 27-6L20 10z" fill="url(#moon)"/><circle cx="21.500" cy="8.500" r="7.500" fill="#c42b1c"/><text x="18.500" y="13" class="badge" fill="#fff">1</text></svg>
    <span class="temp">9°C</span><span class="cond">Temps dégagé</span>
    <svg class="sys" viewBox="0 0 110 24"><path d="M1 16l7-8 7 8" fill="none" stroke="#fff" stroke-width="1.300"/><path d="M32 7.500h14v9H32z" fill="#fff" stroke="#fff"/><path d="M48 10v4M29 5v4M33 5v4M28 9h6v3h-3v5" stroke="#fff" stroke-width="1.300" fill="none"/><path d="M59 10h3l5-4v13l-5-4h-3zM70 10q2 2.500 0 5M73 8q4 4.500 0 9M76 6q5.500 6.500 0 13" fill="none" stroke="#fff" stroke-width="1.200"/><g fill="none" stroke="#fff" stroke-width="1.300"><path d="M93 20q1-10 14-13" opacity=".5"/><path d="M97 20q1-7 10-9M101 20q0-4 6-5"/></g><circle cx="106" cy="19" r="1.500" fill="#fff"/></svg>
    <span class="clock">20:40<br>24/02/2025</span>
    <svg class="notif" viewBox="0 0 22 22"><path d="M1.500 2h19v14.500H14L11 20l-3-3.500H1.500z" fill="none" stroke="#fff" stroke-width="1.300"/></svg>
  </div>
</footer>

<div class="dialog">
  <header><svg class="app"><use href="#qgis"/></svg><span>Compter les points dans les polygo...</span><em>?</em><svg class="x" viewBox="0 0 14 14"><path d="M1 1l12 12M13 1L1 13" stroke="#000" stroke-width="1.200"/></svg></header>
  <div class="body">
    <label>Couche vecteur de polygones en entrée</label>
    <span class="combo">arrondissements<b><svg><use href="#tri"/></svg></b></span>
    <label>Couche vecteur de points en entrée</label>
    <span class="combo">distributeurs-coord<b><svg><use href="#tri"/></svg></b></span>
    <label>Couche vecteur de points en entrée à agréger</label>
    <div class="list">Id<br>X<br>Y</div>
    <label>Méthode statistique utilisée pour l'agrégat</label>
    <span class="combo">somme<b><svg><use href="#tri"/></svg></b></span>
    <label>Nom du champ de décompte en sortie</label>
    <span class="field">NB_DISTR_A</span>
    <label class="file">Fichier de sortie (shapefile)</label>
    <div class="row"><span class="field">C:/Users/Maxime Forriez/Desktop/test.shp</span><span class="btn">Parcourir</span></div>
    <div class="row add"><svg class="k"><use href="#check"/></svg>Ajouter le résultat au canevas</div>
    <div class="row actions"><span class="prog">0%</span><span class="btn dark">OK</span><span class="btn">Fermer</span></div>
  </div>
</div>

<svg class="notes" viewBox="0 0 1920 1080">
  <g fill="none" stroke="#ee1c23" stroke-width="5" stroke-linecap="round">
    <ellipse cx="957.300" cy="278.700" rx="256.700" ry="30"/>
    <ellipse cx="956.300" cy="329.500" rx="260.500" ry="25.500"/>
    <ellipse cx="937" cy="572.500" rx="233.500" ry="33.800"/>
    <ellipse cx="943.800" cy="631.300" rx="236.200" ry="33"/>
    <ellipse cx="955" cy="703" rx="245.500" ry="36.300"/>
    <ellipse cx="1000.500" cy="787.500" rx="68.500" ry="28.800"/>
    <path d="M1216 278.500H1588M1218 328.700H1588M1172 573.300H1381M1383 574.500H1593M1178 630.500H1593M1201 700L1593 839M641 809.300H950"/>
  </g>
  <g class="note">
    <text x="1605" y="246" textLength="258">Nom de la couche</text><text x="1605" y="284" textLength="279">avec des polygones</text>
    <text x="1605" y="340" textLength="258">Nom de la couche</text><text x="1605" y="378" textLength="221">avec des points</text>
    <text x="1610" y="588" textLength="251">Type d'agrégation</text>
    <text x="1611" y="638" textLength="242">Nom du nouveau</text><text x="1611" y="676" textLength="96">champ</text>
    <text x="1609" y="852" textLength="209">Q-GIS crée un</text><text x="1609" y="890" textLength="281">nouveau fichier qu'il</text><text x="1609" y="928" textLength="180">faut nommer</text>
    <text x="393" y="815" textLength="238">Cliquer sur "OK"</text><text x="393" y="853" textLength="166">pour valider</text>
  </g>
</svg>
</body>
</html>
```
FILE: styles.css
```css
* { box-sizing: border-box; }
body { margin: 0; width: 1920px; height: 1080px; overflow: hidden; position: relative; display: flex; flex-direction: column; background: #f0f0f0; color: #000; font: 12.600px/16px "DejaVu Sans Condensed", "DejaVu Sans", sans-serif; font-stretch: condensed; white-space: nowrap; }
svg { display: block; flex: none; overflow: visible; }
i, em, b, s, u { font-style: normal; }
ul { margin: 0; padding: 0; list-style: none; }
.sprite { position: absolute; width: 0; height: 0; }

.titlebar { flex: 0 0 30px; background: #fff; display: flex; align-items: center; padding-left: 4px; }
.app { width: 17px; height: 19px; }
.caption { flex: 1; margin-left: 6px; padding-bottom: 2px; font: 15px/20px "Open Sans", sans-serif; letter-spacing: -.38px; color: #8c8c8c; }
.winbtns { width: 150px; height: 30px; margin-right: 13px; }
.menu { flex: 0 0 25px; display: flex; gap: 15px; padding: 4px 10px 0; border-bottom: 1px solid #b4b4b4; }
.toolbar { flex: 0 0 39px; display: flex; align-items: center; padding-bottom: 2px; border-bottom: 1px solid #b4b4b4; }
.slot { flex: 0 0 35px; height: 34px; display: flex; align-items: center; justify-content: center; }
.slot svg { width: 23px; height: 23px; }
.slot.on { border: 1px solid #777; border-radius: 3px; background: linear-gradient(#c8c8c8, #e0e0e0); }
.gray { filter: grayscale(1); opacity: .55; }
.arr { flex: 0 0 15.200px; display: flex; justify-content: center; padding-right: 2px; }
.arr svg, .t { width: 10px; height: 6px; }
.dim { fill: #999; }
.grip { align-self: stretch; margin: 4px 0; background: radial-gradient(circle at 1px 1px, #c4c4c4 1px, transparent 1.300px) 0 0 / 4px 5px content-box; }
.g0 { flex: 0 0 11px; padding: 0 1px 0 6px; }
.g1 { flex: 0 0 14px; padding: 0 1px 0 8px; }
.g2 { flex: 0 0 13px; padding: 0 0 0 8px; }
.g3 { flex: 0 0 12.500px; padding: 0 0 0 7px; }
.g4 { flex: 0 0 15px; padding: 0 0 0 9px; }
.abc { font: bold 8.500px "DejaVu Sans Condensed", sans-serif; letter-spacing: -.3px; }
.one { font: bold 8px "DejaVu Sans Condensed", sans-serif; letter-spacing: -.4px; }
.info { font: italic bold 15px "Liberation Serif", serif; }
.ismall { font: italic bold 11px "Liberation Serif", serif; }
.eps { font: 24px "Liberation Serif", serif; }
.eps2 { font: 18px "Liberation Serif", serif; }
.tee { font: bold 13px "Liberation Serif", serif; }
.q { font: 15px "Liberation Serif", serif; }
.csw { font: bold 9px "DejaVu Sans Condensed", sans-serif; letter-spacing: -.3px; }

.work { flex: 1; min-height: 0; display: flex; }
.side { flex: 0 0 55px; border-right: 1px solid #b4b4b4; display: flex; flex-direction: column; align-items: center; gap: 10px; padding-top: 6px; }
.side > svg, .pair svg:first-child { width: 24px; height: 24px; }
.side .hgrip { width: 48px; height: 6px; margin-bottom: -6px; }
.side .hgrip.low { margin: 2px 0 -4.500px; }
.pair { display: flex; align-items: center; gap: 7px; }
.hgrip, .splitter, h2 i, .vsplit { background: radial-gradient(circle at 1.500px 1.500px, #c0c0c0 1px, transparent 1.500px) 0 0 / 5px 3px; }

.docks { flex: 0 0 317px; padding-left: 1px; display: flex; flex-direction: column; }
h2 { margin: 0; font: inherit; display: flex; align-items: center; height: 23px; flex: none; padding-right: 1px; }
h2 i { flex: 1; height: 6px; margin: -4px 5px 0 3px; }
h2 svg { width: 16px; height: 16px; }
h2 span { padding: 0 2px; }
.mini { display: flex; align-items: center; gap: 11px; padding: 0 0 9px 7px; height: 36px; flex: none; }
.mini svg { width: 16px; height: 16px; }
.mini .t { width: 10px; height: 6px; }
.layers-mini { height: 35px; padding-bottom: 6px; }
.layers-mini .w { margin-right: -6px; }
.box { background: #fff; border: 2px solid #b8b8b8; border-left-width: 1px; border-radius: 2px; flex: none; }
.explorer { height: 106px; overflow: hidden; display: flex; }
.files { flex: 1; padding-left: 6px; }
.files li { display: flex; align-items: center; }
.r17 { height: 17.500px; } .r16 { height: 16px; } .r19 { height: 18.500px; }
.cut { height: 14px; line-height: 10px; padding-top: 5px; }
.files em, .layers em { align-self: stretch; flex: 0 0 16px; border-left: 1px dotted #999; margin-left: 5px; background: linear-gradient(90deg, #bbb 50%, transparent 0) 0 50% / 3px 1px repeat-x; }
.files .pm { border: 0; margin-left: 0; flex-basis: 18.500px; background: linear-gradient(#333, #333) 2.500px 50% / 5px 1px no-repeat, linear-gradient(#333, #333) 4.500px 50% / 1px 5px no-repeat, linear-gradient(#f7f7f7, #f7f7f7) 1px 50% / 8px 8px no-repeat, linear-gradient(#888, #888) 0 50% / 10px 10px no-repeat; }
.files .fo { width: 16px; height: 18px; margin-right: 4.500px; }
.files .wide svg { width: 20px; height: 18px; margin: 0 6px 0 -3px; }
.files .wide em { flex-basis: 15px; }
.scroll { width: 16px; display: flex; flex-direction: column; background: #e8e8e8; }
.scroll b { height: 16px; border: 1px solid #909090; border-radius: 2px; background: linear-gradient(90deg, #fdfdfd, #e0e0e0); display: flex; align-items: center; justify-content: center; }
.scroll .thumb { height: 25px; }
.scroll s { flex: 1; }
.scroll svg { width: 8px; height: 5px; }
.up { transform: scaleY(-1); }
.splitter { flex: none; height: 6px; width: 104px; margin: 1px 0 0 105px; }
.layers { height: 197px; font-weight: bold; letter-spacing: .25px; padding-left: 9px; overflow: hidden; }
.layers div { display: flex; align-items: center; height: 18.500px; }
.layers em { margin-left: 0; flex-basis: 14px; }
.k { width: 16px; height: 16px; }
.layers u { margin-left: 6px; }
.layers .d { width: 18px; height: 18px; margin-left: 7px; }
.layers .in { margin-left: 7px; }
.swatch { width: 18px; height: 18px; margin: 0 6px 0 7px; background: #55b36c; border: 1px solid #234c2d; }
.s2 { margin-top: 0; }
.path { display: flex; flex-direction: column; padding: 7px 9px 0 8px; }
.top { margin: 3px 0 4px; height: 16px; line-height: 16px; }
.second { margin: 8px 0 4px; }
.row { display: flex; align-items: center; }
.path .row { height: 29px; }
.field { flex: 1; height: 22px; border: 1px solid #b4b4b4; border-radius: 3px; background: #fff; padding: 2px 4px; line-height: 17px; box-shadow: inset 0 0 0 .500px #b4b4b4; }
.pick .btn { flex: 0 0 30px; height: 29px; margin-left: 7px; }
.pick svg { width: 20px; height: 20px; }
.btn { height: 28px; display: flex; align-items: center; justify-content: center; border: 1px solid #b4b4b4; border-radius: 3px; background: linear-gradient(#fafafa, #ddd); box-shadow: inset 0 0 0 .500px #bbb; }
.dark { border-color: #777; }
.combo { height: 22px; border: 1px solid #b4b4b4; border-radius: 3px; background: linear-gradient(#fafafa, #ddd); display: flex; align-items: center; padding-left: 4px; box-shadow: inset 0 0 0 .500px #bbb; }
.combo b { margin-left: auto; align-self: stretch; width: 16px; border-left: 1px solid #b4b4b4; display: flex; align-items: center; justify-content: center; }
.combo svg { width: 8px; height: 5px; }
.crit { justify-content: space-between; margin-top: 4px; }
.crit .combo { width: 147px; }
.path label + .field { margin-left: 5px; }
.trio { gap: 10px; margin-top: 5px; }
.trio .btn { flex: 1; }
.help { height: 31px; margin-top: 8px; gap: 4px; }
.help svg { width: 20px; height: 20px; }
.vsplit { width: 4px; height: 284px; margin: 287px 1px 0 2px; background-size: 4px 5px; }
.canvas { width: 1540px; background: #fff; border: 1px solid #a8a8a8; border-right-color: #bbb; border-radius: 2px; overflow: hidden; }

.status { flex: 0 0 34px; display: flex; align-items: center; padding-left: 981px; }
.status > span:first-child { flex: 0 0 55px; }
.status .ext { flex: 0 0 296px; margin-left: 4px; text-align: center; }
.tog { width: 19px; height: 28px; margin-left: 1px; border-color: #777; background: #cfcfcf; }
.tog svg { width: 15px; height: 15px; }
.lab1 { width: 64px; padding-left: 9px; }
.status .combo { width: 97px; padding-left: 4px; background: #fff; }
.lab2 { width: 65px; padding-left: 9px; }
.status .spin { flex: 0 0 108px; height: 29px; display: flex; padding: 0 0 0 5px; line-height: 28px; }
.spin b { margin-left: auto; width: 16px; border-left: 1px solid #b4b4b4; background: linear-gradient(#f5f5f5 48%, #aaa 49% 52%, #e4e4e4 53%); display: flex; flex-direction: column; align-items: center; justify-content: space-around; }
.spin svg { width: 7px; height: 4px; }
.status .k { margin-left: 6px; }
.lab3 { width: 60px; padding-left: 6px; }
.crs { width: 18px; height: 18px; margin-right: 5px; }
.msg { width: 20px; height: 18px; margin-left: auto; margin-right: 17px; }

.taskbar { flex: 0 0 50px; display: flex; background: linear-gradient(90deg, #1d1d1d 0, #1d1d1d 29%, #35241c 34%, #262020 41%, #2a1e22 50%, #35261c 65%, #1f1d1d 69%, #1c1c1c 100%); color: #fff; }
.tb { width: 51px; margin-right: 11px; border-bottom: 3px solid #76b9ed; display: flex; align-items: center; justify-content: center; padding-top: 2px; }
.tb svg { width: 28px; height: 28px; }
.tb.plain { border-color: transparent; width: 60px; margin-right: 0; }
.tb.plain + .two { margin-left: 9px; }
.two { border-image: linear-gradient(90deg, #76b9ed 79%, #4f7da3 79%) 1; border-width: 0 0 3px; }
.two svg { margin-left: -1px; }
.tb.act { width: 61px; margin: 0 6px 0 -5px; background: #4a4a4a; }
.bigq { font: italic bold 28px "Liberation Serif", serif; }
.tray { margin-left: auto; display: flex; align-items: center; padding-right: 5px; margin-right: 5px; border-right: 1px solid #777; font-family: "Open Sans", sans-serif; font-stretch: normal; }
.wx { width: 30px; height: 32px; margin-right: 8px; }
.badge { font: 11px "Open Sans", sans-serif; }
.temp { font-size: 17px; width: 39px; letter-spacing: -.8px; }
.cond { font-size: 17px; width: 146px; }
.sys { width: 110px; height: 24px; }
.clock { width: 94px; text-align: center; font-size: 14px; line-height: 22.500px; letter-spacing: -.3px; margin: 0 14px 0 2px; }
.notif { width: 22px; height: 22px; margin-right: 20px; }

.dialog { position: absolute; left: 761px; top: 210px; width: 398px; height: 602px; border: 1px solid #666; background: #f0f0f0; box-shadow: 0 7px 20px rgba(0, 0, 0, .42); display: flex; flex-direction: column; }
.dialog header { flex: 0 0 37px; background: #fff; display: flex; align-items: center; padding: 0 0 1px 11px; font: 15px/20px "Open Sans", sans-serif; }
.dialog header span { width: 242px; margin-left: 6px; letter-spacing: -.38px; }
.dialog header em { margin-left: 29px; width: 10px; font-size: 16px; }
.dialog .x { width: 13px; height: 13px; margin-left: 45px; }
.body { padding: 5px 11px 0; display: flex; flex-direction: column; }
.body label { height: 28px; padding-top: 7px; }
.body > .field { flex: none; }
.list { height: 170px; border: 1px solid #b4b4b4; border-radius: 2px; background: #fff; padding: 1px 4px; box-shadow: inset 0 0 0 .500px #b4b4b4; }
.body .file { height: 53px; padding-top: 28px; }
.body .row .btn { flex: 0 0 93px; margin-left: 10px; }
.add { margin-top: 10px; height: 18px; gap: 6px; }
.actions { margin-top: 13px; }
.prog { flex: 0 0 167px; height: 24px; border: 1px solid #888; border-radius: 2px; background: linear-gradient(#0a7ad8, #0a7ad8) 2px 50% / 3px 19px no-repeat #fff; text-align: center; font-weight: bold; line-height: 22px; }
.body .row .prog + .btn { margin-left: 11px; }
.notes { position: absolute; left: 0; top: 0; width: 1920px; height: 1080px; pointer-events: none; }
.note { fill: #ee1c23; font: 32.500px "Liberation Sans", sans-serif; }
```
